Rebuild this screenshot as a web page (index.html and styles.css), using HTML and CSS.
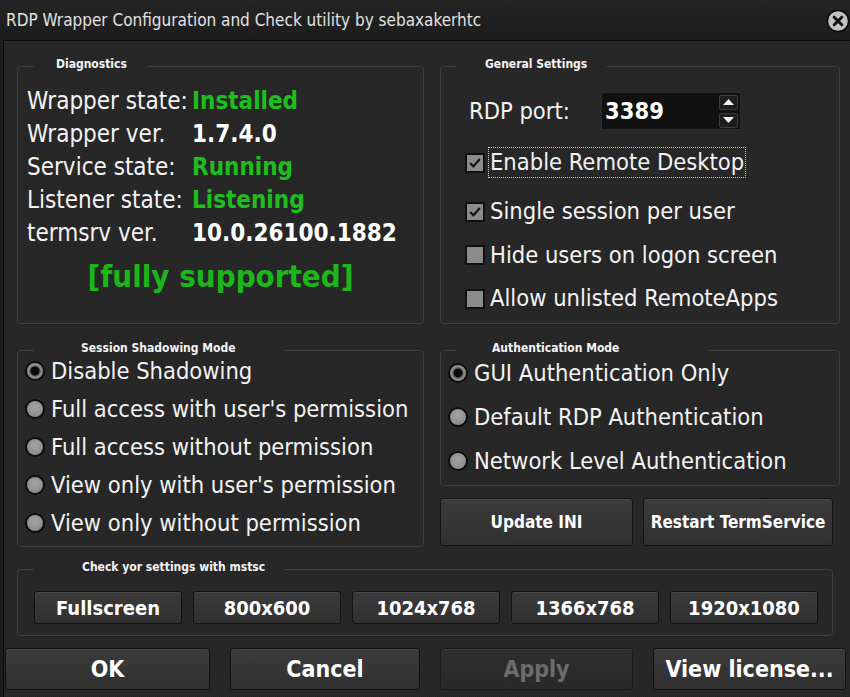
FILE: index.html
```html
<!DOCTYPE html>
<html lang="en">
<head>
<meta charset="utf-8">
<title>RDP Wrapper Configuration</title>
<link rel="stylesheet" href="styles.css">
</head>
<body>
<div class="window">
  <header class="titlebar">
    <span class="title">RDP Wrapper Configuration and Check utility by sebaxakerhtc</span>
    <span class="close" aria-label="Close">
      <svg width="24" height="24" viewBox="0 0 24 24"><circle cx="12" cy="12" r="10.6" fill="#c2c2c2" stroke="#0b0b0b" stroke-width="1.6"/><path d="M8.2 8.2l7.6 7.6M15.8 8.2l-7.6 7.6" stroke="#121212" stroke-width="3" stroke-linecap="round"/></svg>
    </span>
  </header>
  <main class="client">
    <div class="row-top">
      <fieldset class="group">
        <legend class="lg-diag">Diagnostics</legend>
        <div class="diag-body">
          <div class="diag-grid">
            <span>Wrapper state:</span><b class="green">Installed</b>
            <span>Wrapper ver.</span><b>1.7.4.0</b>
            <span>Service state:</span><b class="green">Running</b>
            <span>Listener state:</span><b class="green">Listening</b>
            <span>termsrv ver.</span><b>10.0.26100.1882</b>
          </div>
          <div class="supported">[fully supported]</div>
        </div>
      </fieldset>
      <fieldset class="group">
        <legend class="lg-general">General Settings</legend>
        <div class="general-body">
          <div class="port-row">
            <span class="port-label">RDP port:</span>
            <div class="spin">
              <span class="spin-val">3389</span>
              <div class="spin-btns">
                <span class="sb"><svg width="11" height="6" viewBox="0 0 11 6"><path d="M0 6L5.5 0L11 6Z" fill="#f2f2f2"/></svg></span>
                <span class="sb"><svg width="11" height="6" viewBox="0 0 11 6"><path d="M0 0L5.5 6L11 0Z" fill="#f2f2f2"/></svg></span>
              </div>
            </div>
          </div>
          <div class="check first">
            <span class="box"><svg width="16" height="16" viewBox="0 0 16 16"><path d="M3.2 8l3.2 3.4L12.8 4" fill="none" stroke="#151515" stroke-width="2.3"/></svg></span>
            <span class="cap focused">Enable Remote Desktop</span>
          </div>
          <div class="check second">
            <span class="box"><svg width="16" height="16" viewBox="0 0 16 16"><path d="M3.2 8l3.2 3.4L12.8 4" fill="none" stroke="#151515" stroke-width="2.3"/></svg></span>
            <span class="cap">Single session per user</span>
          </div>
          <div class="check">
            <span class="box"></span>
            <span class="cap">Hide users on logon screen</span>
          </div>
          <div class="check">
            <span class="box"></span>
            <span class="cap">Allow unlisted RemoteApps</span>
          </div>
        </div>
      </fieldset>
    </div>

    <div class="row-mid">
      <fieldset class="group">
        <legend class="lg-shadow">Session Shadowing Mode</legend>
        <div class="shadow-body">
          <div class="radio"><span class="dot on"></span>Disable Shadowing</div>
          <div class="radio"><span class="dot"></span>Full access with user's permission</div>
          <div class="radio"><span class="dot"></span>Full access without permission</div>
          <div class="radio"><span class="dot"></span>View only with user's permission</div>
          <div class="radio"><span class="dot"></span>View only without permission</div>
        </div>
      </fieldset>
      <div class="right-col">
        <fieldset class="group auth">
          <legend class="lg-auth">Authentication Mode</legend>
          <div class="auth-body">
            <div class="radio tall"><span class="dot on"></span>GUI Authentication Only</div>
            <div class="radio tall"><span class="dot"></span>Default RDP Authentication</div>
            <div class="radio tall"><span class="dot"></span>Network Level Authentication</div>
          </div>
        </fieldset>
        <div class="action-row">
          <button class="btn btn-mid w193">Update INI</button>
          <button class="btn btn-mid w190">Restart TermService</button>
        </div>
      </div>
    </div>

    <fieldset class="group mstsc">
      <legend class="lg-mstsc">Check yor settings with mstsc</legend>
      <div class="mstsc-body">
        <button class="btn btn-res">Fullscreen</button>
        <button class="btn btn-res">800x600</button>
        <button class="btn btn-res">1024x768</button>
        <button class="btn btn-res">1366x768</button>
        <button class="btn btn-res">1920x1080</button>
      </div>
    </fieldset>

    <div class="row-bottom">
      <button class="btn btn-big w205">OK</button>
      <button class="btn btn-big w190">Cancel</button>
      <button class="btn btn-big w193 disabled" disabled>Apply</button>
      <button class="btn btn-big w193">View license...</button>
    </div>
  </main>
</div>
</body>
</html>
```

FILE: styles.css
```css
* { box-sizing: border-box; }

body {
  margin: 0;
  background: #1e1e1e;
  font-family: "DejaVu Sans Condensed", "DejaVu Sans", sans-serif;
  font-stretch: condensed;
  color: #f3f3f3;
}

.window {
  width: 850px;
  height: 697px;
  display: flex;
  flex-direction: column;
  overflow: hidden;
  background: #1e1e1e;
}

.titlebar {
  height: 40px;
  flex: none;
  display: flex;
  align-items: center;
  justify-content: space-between;
  padding-left: 6px;
  background: linear-gradient(#252525, #1c1c1c);
}

.title {
  font-size: 17px;
  color: #e2e2e2;
}

.close {
  display: flex;
  width: 24px;
  height: 24px;
  margin-right: 0;
  margin-top: 2px;
}

.client {
  flex: 1;
  margin-left: 3px;
  border-left: 1px solid #090909;
  border-top: 1px solid #090909;
  padding-top: 16px;
  display: flex;
  flex-direction: column;
  background-color: #272727;
  background-image: repeating-conic-gradient(#2b2b2b 0 25%, #232323 0 50%);
  background-size: 2px 2px;
}

.group {
  margin: 0;
  padding: 0;
  min-width: 0;
  border: 1px solid #3e3e3e;
  border-radius: 4px;
}

legend {
  font-size: 12px;
  font-weight: bold;
  line-height: 14px;
  margin-left: 16px;
  padding: 0 20px 4px 22px;
  color: #f4f4f4;
}

.lg-general { padding-left: 28px; }
.lg-shadow { padding-left: 47px; padding-right: 50px; }
.lg-auth { padding-left: 35px; padding-right: 90px; }
.lg-mstsc { padding-left: 48px; }

/* rows */
.row-top {
  display: grid;
  grid-template-columns: 407px 400px;
  column-gap: 16px;
  margin-left: 13px;
  height: 267px;
  flex: none;
}

.row-mid {
  display: grid;
  grid-template-columns: 407px 400px;
  column-gap: 16px;
  margin: 17px 0 0 13px;
  height: 206px;
  flex: none;
}

/* diagnostics */
.diag-body {
  padding: 10px 0 0 9px;
  font-size: 24px;
}

.diag-grid {
  display: grid;
  grid-template-columns: 165px auto;
  line-height: 33px;
}

.diag-grid b { font-weight: bold; color: #ffffff; }
.diag-grid b.green { color: #1fbe1f; }

.supported {
  margin: 8px 0 0 -9px;
  text-align: center;
  font-size: 31px;
  font-weight: bold;
  line-height: 36px;
  color: #1ab61a;
}

/* general settings */
.general-body {
  padding: 17px 0 0 24px;
  font-size: 23.5px;
}

.port-row {
  display: flex;
  align-items: center;
  height: 38px;
}

.port-label {
  margin-left: 4px;
  width: 132px;
}

.spin {
  width: 140px;
  height: 38px;
  background: #111111;
  border: 1px solid #2c2c2c;
  display: flex;
  align-items: center;
  justify-content: space-between;
  padding: 0 2px 0 3px;
}

.spin-val {
  font-weight: bold;
  font-size: 23.5px;
  color: #ffffff;
}

.spin-btns {
  display: flex;
  flex-direction: column;
  gap: 3px;
}

.sb {
  width: 19px;
  height: 15px;
  border: 1px solid #3c3c3c;
  border-radius: 2px;
  background: #1d1d1d;
  display: flex;
  align-items: center;
  justify-content: center;
}

.check {
  display: flex;
  align-items: center;
  height: 31px;
  margin-top: 12.5px;
}

.check.first { margin-top: 17px; }
.check.second { margin-top: 18px; }

.box {
  width: 20px;
  height: 20px;
  border: 2px solid #101010;
  background: #8b8b8b;
  display: flex;
  align-items: center;
  justify-content: center;
  flex: none;
}

.cap {
  margin-left: 3px;
  padding: 0 1px;
  line-height: 29px;
  border: 1px dotted transparent;
}

.cap.focused { border-color: #c9c9c9; }

/* radios */
.shadow-body {
  margin-top: -7px;
  padding-left: 7px;
  font-size: 23.5px;
}

.right-col {
  display: flex;
  flex-direction: column;
}

.auth { height: 145px; flex: none; }

.auth-body {
  margin-top: -8px;
  padding-left: 7px;
  font-size: 23.5px;
}

.radio {
  display: flex;
  align-items: center;
  height: 38px;
}

.radio.tall { height: 44px; }

.dot {
  width: 20px;
  height: 20px;
  border-radius: 50%;
  border: 2px solid #0d0d0d;
  background: radial-gradient(circle at 50% 40%, #a4a4a4, #848484);
  margin-right: 6px;
  flex: none;
}

.dot.on {
  background: radial-gradient(circle, #0a0a0a 0 3.8px, #4c4c4c 4.8px, #8c8c8c 6px);
}

/* buttons */
.btn {
  font-family: inherit;
  font-stretch: condensed;
  font-weight: bold;
  color: #ffffff;
  background: linear-gradient(#3b3b3b, #303030);
  border: 1px solid #131313;
  border-radius: 3px;
  box-shadow: inset 0 1px 0 rgba(255, 255, 255, 0.07);
  display: flex;
  align-items: center;
  justify-content: center;
  padding: 0;
  margin: 0;
}

.btn.disabled {
  background: linear-gradient(#2e2e2e, #292929);
  color: #6c6c6c;
  border-color: #1a1a1a;
}

.action-row {
  display: flex;
  gap: 10px;
  margin-top: 12px;
  height: 48px;
}

.btn-mid { font-size: 17px; height: 48px; }

.w193 { width: 193px; }
.w190 { width: 190px; }
.w205 { width: 205px; }

.mstsc {
  margin: 13px 0 0 13px;
  width: 816px;
  height: 76px;
  flex: none;
}

.mstsc-body {
  display: flex;
  gap: 11px;
  padding: 13px 0 0 16px;
}

.btn-res {
  width: 148px;
  height: 33px;
  font-size: 20px;
}

.row-bottom {
  display: flex;
  gap: 20px;
  margin: 12px 0 0 1px;
  height: 42px;
  flex: none;
}

.btn-big {
  height: 42px;
  font-size: 23px;
}
```
